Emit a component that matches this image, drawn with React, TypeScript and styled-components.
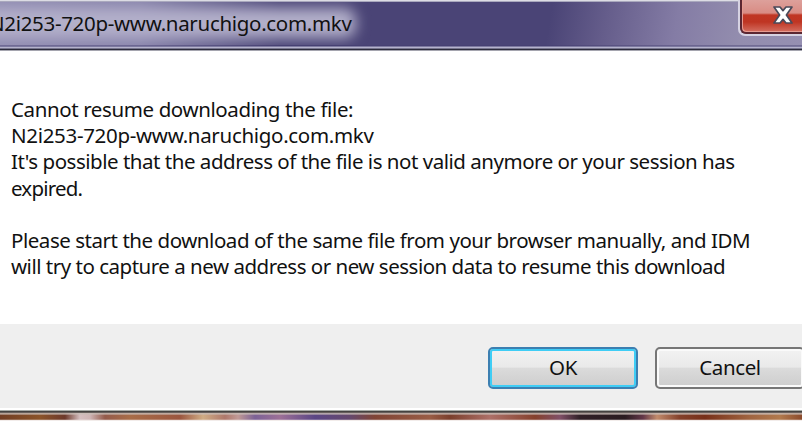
import { FC } from 'react'
import styled, { createGlobalStyle } from 'styled-components'

const FILE_NAME = 'N2i253-720p-www.naruchigo.com.mkv'

interface MessageLine {
  text: string
  spacing: number
}

const messageLines: MessageLine[] = [
  { text: 'Cannot resume downloading the file:', spacing: -0.39 },
  { text: FILE_NAME, spacing: -0.31 },
  { text: "It's possible that the address of the file is not valid anymore or your session has", spacing: -0.48 },
  { text: 'expired.', spacing: -0.8 },
  { text: '', spacing: 0 },
  { text: 'Please start the download of the same file from your browser manually, and IDM', spacing: -0.46 },
  { text: 'will try to capture a new address or new session data to resume this download', spacing: -0.49 }
]

const App: FC = () => {
  return (
    <>
      <GlobalStyle />
      <Dialog>
        <TitleBar>
          <Title>{FILE_NAME}</Title>
          <CloseButton aria-label="Close">
            <CloseIcon />
          </CloseButton>
        </TitleBar>
        <Message>
          {messageLines.map((line, index) => (
            <Line key={index} $spacing={line.spacing}>
              {line.text}
            </Line>
          ))}
        </Message>
        <Footer>
          <Button $focused>OK</Button>
          <Button>Cancel</Button>
        </Footer>
        <BottomFrame />
      </Dialog>
    </>
  )
}

const CloseIcon: FC = () => (
  <svg width="22" height="20" viewBox="0 0 22 20">
    <path
      d="M2 2H8L11 5.6L14 2H20L14.4 10L20 18H14L11 14.4L8 18H2L7.6 10Z"
      fill="#fff"
      stroke="#4b4a59"
      strokeWidth="1.7"
      strokeLinejoin="round"
    />
  </svg>
)

const GlobalStyle = createGlobalStyle`
  * {
    box-sizing: border-box;
  }
  body {
    margin: 0;
    overflow: hidden;
    font-family: 'Noto Sans', sans-serif;
    font-size: 20.5px;
    color: #111;
  }
`

const Dialog = styled.div`
  display: flex;
  flex-direction: column;
  width: 802px;
  height: 421px;
  overflow: hidden;
  background: #fff;
`

const TitleBar = styled.header`
  display: flex;
  flex: none;
  align-items: flex-start;
  justify-content: space-between;
  height: 51px;
  background:
    linear-gradient(#dcdce4 0 1px, #a9a8bd 1px 2px, transparent 2px 45px, #3f3a6c66 45px 46px, #7d79a0 46px 47px, #b5b3cd 47px 48px, #77758e 48px 49px, #2c2b3b 49px 50px, #a5a5af 50px),
    linear-gradient(90deg, #918cb2 0, #8984ac 140px, #7a759f00 280px),
    linear-gradient(100deg, #4a4476 0, #4a4476 545px, #655d8b 600px, #847ca5 670px, #938dae 735px, #9690b2 802px);
`

const Title = styled.h1`
  position: relative;
  z-index: 0;
  margin: 8px 0 0 -11px;
  font-size: 20.5px;
  font-weight: 400;
  line-height: 30px;
  letter-spacing: -0.31px;
  white-space: nowrap;
  clip-path: inset(-6px -30px -7px 0);

  /* glass glow behind the caption */
  &::before {
    content: '';
    position: absolute;
    z-index: -1;
    inset: 0 -4px 0 -30px;
    border-radius: 12px;
    background: #b3b0ca;
    filter: blur(7px);
  }
`

const CloseButton = styled.button`
  display: flex;
  flex: none;
  align-items: flex-start;
  width: 62px;
  height: 34px;
  padding: 5px 0 0 30px;
  border: 2px solid #5b2631;
  border-width: 0 0 2px 2px;
  border-radius: 0 0 0 6px;
  background: linear-gradient(#dda09b 0, #d98c84 13px, #c03624 15px, #bf3523 22px, #d2695b 31px);
  box-shadow:
    -1px 1px 0 1px #d6d2e2,
    inset 1px -1px 0 #e69b91;
`

const Message = styled.main`
  flex: none;
  height: 273px;
  padding: 45px 0 0 11px;
`

const Line = styled.p<{ $spacing: number }>`
  height: 26.2px;
  margin: 0;
  line-height: 26.2px;
  letter-spacing: ${({ $spacing }) => $spacing}px;
  white-space: nowrap;
`

const Footer = styled.footer`
  display: flex;
  flex: none;
  gap: 17px;
  height: 84px;
  padding: 23px 0 0 488px;
  background: #efefef;
`

const Button = styled.button<{ $focused?: boolean }>`
  flex: none;
  width: 150px;
  height: 42px;
  padding: 0 0 2px;
  border: 2px solid ${({ $focused }) => ($focused ? '#3c7fb1' : '#767676')};
  border-radius: 5px;
  background: linear-gradient(#f2f2f2 0, #e9e9e9 48%, #dbdbdb 50%, #cdcdcd 100%);
  box-shadow: inset 0 0 0 2px ${({ $focused }) => ($focused ? '#3fcdf5' : '#fafafa')};
  font-family: inherit;
  font-size: 20.5px;
  color: #111;
  letter-spacing: -0.4px;
`

const BottomFrame = styled.div`
  flex: none;
  height: 13px;
  background:
    linear-gradient(#fff 0 2px, #a6aaa6 2px 3px, #444240 3px 4px, #66605c 4px 5px, #c9bdb7cc 5px 6px, #c9bdb788 6px 7px, transparent 7px 11px, #ffffff33 11px 12px, #f2ecea 12px),
    linear-gradient(90deg, #713d23 0, #8b5429 40px, #6d392b 65px, #d5bfc0 80px, #cfb5b5 90px, #945b4b 105px, #a86d48 130px, #9b563f 180px, #d0ad85 203px, #ae786b 225px, #c09a96 238px, #7c6296 255px, #9c7097 280px, #5b4685 315px, #65486d 350px, #804435 375px, #995d45 430px, #7b3f2c 450px, #ad7068 490px, #85412d 535px, #805067 560px, #302027 580px, #2a1c20 625px, #633748 643px, #c18b6c 657px, #83402a 680px, #783019 705px, #a06540 750px, #b17a4d 780px, #8b4b2c 802px);
`

export default App
